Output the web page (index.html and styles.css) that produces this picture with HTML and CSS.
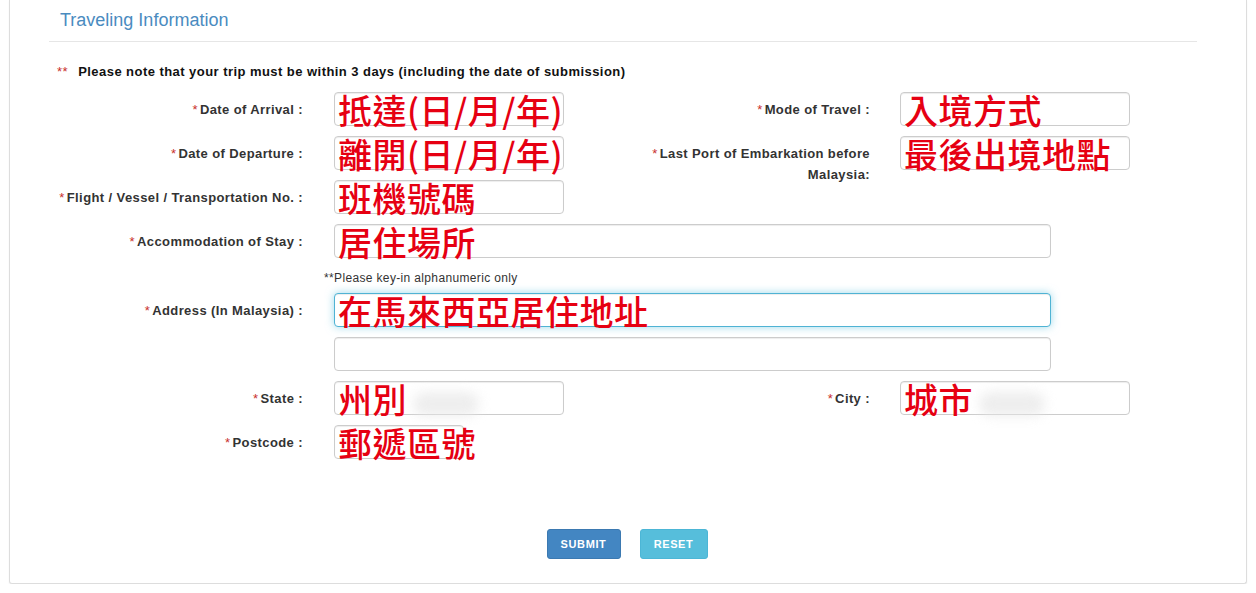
FILE: index.html
```html
<!DOCTYPE html>
<html lang="en">
    <head>
        <meta charset="utf-8">
        <link rel="stylesheet" href="styles.css">
        <title>Traveling Information</title>
    </head>
    <body>
        <div class="panel">
            <h3 class="panel-title">Traveling Information</h3>

            <p class="trip-note"><span class="req">**</span>&nbsp; Please note that your trip must be within 3 days (including the date of submission)</p>

            <form class="travel-form">
                <div class="form-row">
                    <div class="pair">
                        <label class="field-label"><span class="req">*</span>Date of Arrival :</label>
                        <div class="field">
                            <input type="text" class="input">
                            <span class="mark">抵達(日/月/年)</span>
                        </div>
                    </div>
                    <div class="pair pair-right">
                        <label class="field-label"><span class="req">*</span>Mode of Travel :</label>
                        <div class="field">
                            <input type="text" class="input">
                            <span class="mark">入境方式</span>
                        </div>
                    </div>
                </div>

                <div class="form-row">
                    <div class="pair">
                        <label class="field-label"><span class="req">*</span>Date of Departure :</label>
                        <div class="field">
                            <input type="text" class="input">
                            <span class="mark">離開(日/月/年)</span>
                        </div>
                    </div>
                    <div class="pair pair-right">
                        <label class="field-label"><span class="req">*</span>Last Port of Embarkation before Malaysia:</label>
                        <div class="field">
                            <input type="text" class="input">
                            <span class="mark">最後出境地點</span>
                        </div>
                    </div>
                </div>

                <div class="form-row">
                    <div class="pair">
                        <label class="field-label"><span class="req">*</span>Flight / Vessel / Transportation No. :</label>
                        <div class="field">
                            <input type="text" class="input">
                            <span class="mark">班機號碼</span>
                        </div>
                    </div>
                </div>

                <div class="form-row">
                    <label class="field-label"><span class="req">*</span>Accommodation of Stay :</label>
                    <div class="field field-wide">
                        <input type="text" class="input">
                        <span class="mark">居住場所</span>
                    </div>
                </div>

                <div class="hint-row">**Please key-in alphanumeric only</div>

                <div class="form-row">
                    <label class="field-label"><span class="req">*</span>Address (In Malaysia) :</label>
                    <div class="field field-wide">
                        <input type="text" class="input input-focus">
                        <span class="mark">在馬來西亞居住地址</span>
                    </div>
                </div>

                <div class="form-row">
                    <label class="field-label"></label>
                    <div class="field field-wide">
                        <input type="text" class="input">
                    </div>
                </div>

                <div class="form-row">
                    <div class="pair">
                        <label class="field-label"><span class="req">*</span>State :</label>
                        <div class="field">
                            <input type="text" class="input">
                            <span class="mark">州別<span class="smudge"></span></span>
                        </div>
                    </div>
                    <div class="pair pair-right">
                        <label class="field-label"><span class="req">*</span>City :</label>
                        <div class="field">
                            <input type="text" class="input">
                            <span class="mark">城市<span class="smudge"></span></span>
                        </div>
                    </div>
                </div>

                <div class="form-row">
                    <label class="field-label"><span class="req">*</span>Postcode :</label>
                    <div class="field field-short">
                        <input type="text" class="input">
                        <span class="mark">郵遞區號</span>
                    </div>
                </div>

                <div class="buttonbox">
                    <button type="button" class="btn btn-submit">SUBMIT</button>
                    <button type="reset" class="btn btn-reset">RESET</button>
                </div>
            </form>
        </div>
    </body>
</html>
```

FILE: styles.css
```css
body {
  margin: 0;
  background-color: #ffffff;
  color: #333333;
  font-family: "Liberation Sans", Arial, Helvetica, sans-serif;
  font-size: 13px;
}
.panel {
  margin: 0 9px;
  padding: 0 49px 24px 39px;
  border: 1px solid #dddddd;
  border-top: none;
  border-radius: 0 0 3px 3px;
  box-shadow: 0 1px 2px rgba(0, 0, 0, 0.06);
  background-color: #ffffff;
}
.panel-title {
  margin: 0;
  padding: 10px 0 11px 11px;
  line-height: 20px;
  font-size: 18px;
  font-weight: 400;
  color: #4a8bbf;
  border-bottom: 1px solid #e6e6e6;
}
.trip-note {
  margin: 22px 0 12px 8px;
  line-height: 16px;
  font-weight: 700;
  letter-spacing: 0.45px;
  color: #111111;
}
.req {
  color: #c9302c;
  font-weight: 400;
  margin-right: 2px;
}
.form-row {
  display: flex;
  height: 34px;
  margin-bottom: 10px;
}
.pair {
  display: flex;
  width: 591px;
}
.pair-right {
  width: auto;
}
.pair-right .field-label {
  width: 230px;
  margin-right: 30px;
}
.field-label {
  flex: none;
  width: 254px;
  margin-right: 31px;
  padding-top: 7px;
  line-height: 21px;
  text-align: right;
  font-weight: 700;
  letter-spacing: 0.4px;
  color: #333333;
  box-sizing: border-box;
}
.field {
  position: relative;
  flex: none;
  width: 230px;
  height: 34px;
}
.field-wide {
  width: 717px;
}
.field-short {
  width: 130px;
}
.input {
  display: block;
  width: 100%;
  height: 34px;
  margin: 0;
  padding: 6px 12px;
  box-sizing: border-box;
  border: 1px solid #cccccc;
  border-radius: 4px;
  background-color: #ffffff;
  box-shadow: inset 0 1px 1px rgba(0, 0, 0, 0.075);
  font-family: inherit;
  font-size: 12px;
}
.input-focus {
  border-color: #4fb3d4;
  box-shadow: inset 0 1px 1px rgba(0, 0, 0, 0.075), 0 0 8px rgba(91, 192, 222, 0.6);
}
.mark {
  position: absolute;
  left: 4px;
  top: 1px;
  line-height: 34px;
  white-space: nowrap;
  font-family: "Noto Sans CJK TC", "Noto Sans CJK SC", sans-serif;
  font-size: 34px;
  font-weight: 500;
  letter-spacing: 0.5px;
  color: #e60012;
  pointer-events: none;
}
.smudge {
  display: inline-block;
  width: 66px;
  height: 24px;
  margin-left: 6px;
  vertical-align: middle;
  border-radius: 12px;
  background-color: #e8e8e8;
  filter: blur(6px);
  opacity: 0.75;
}
.hint-row {
  height: 15px;
  margin: 0 0 10px 275px;
  padding-top: 3px;
  box-sizing: border-box;
  line-height: 14px;
  font-size: 12px;
  letter-spacing: 0.35px;
  color: #333333;
}
.buttonbox {
  display: flex;
  justify-content: center;
  gap: 19px;
  margin: 70px 0 0 8px;
}
.btn {
  height: 30px;
  padding: 0;
  border: 1px solid transparent;
  border-radius: 3px;
  font-family: inherit;
  font-size: 11px;
  font-weight: 700;
  letter-spacing: 0.6px;
  color: #ffffff;
}
.btn-submit {
  width: 74px;
  background-color: #4386c2;
  border-color: #3b79b1;
}
.btn-reset {
  width: 68px;
  background-color: #56bedb;
  border-color: #4cb6d6;
}
```
